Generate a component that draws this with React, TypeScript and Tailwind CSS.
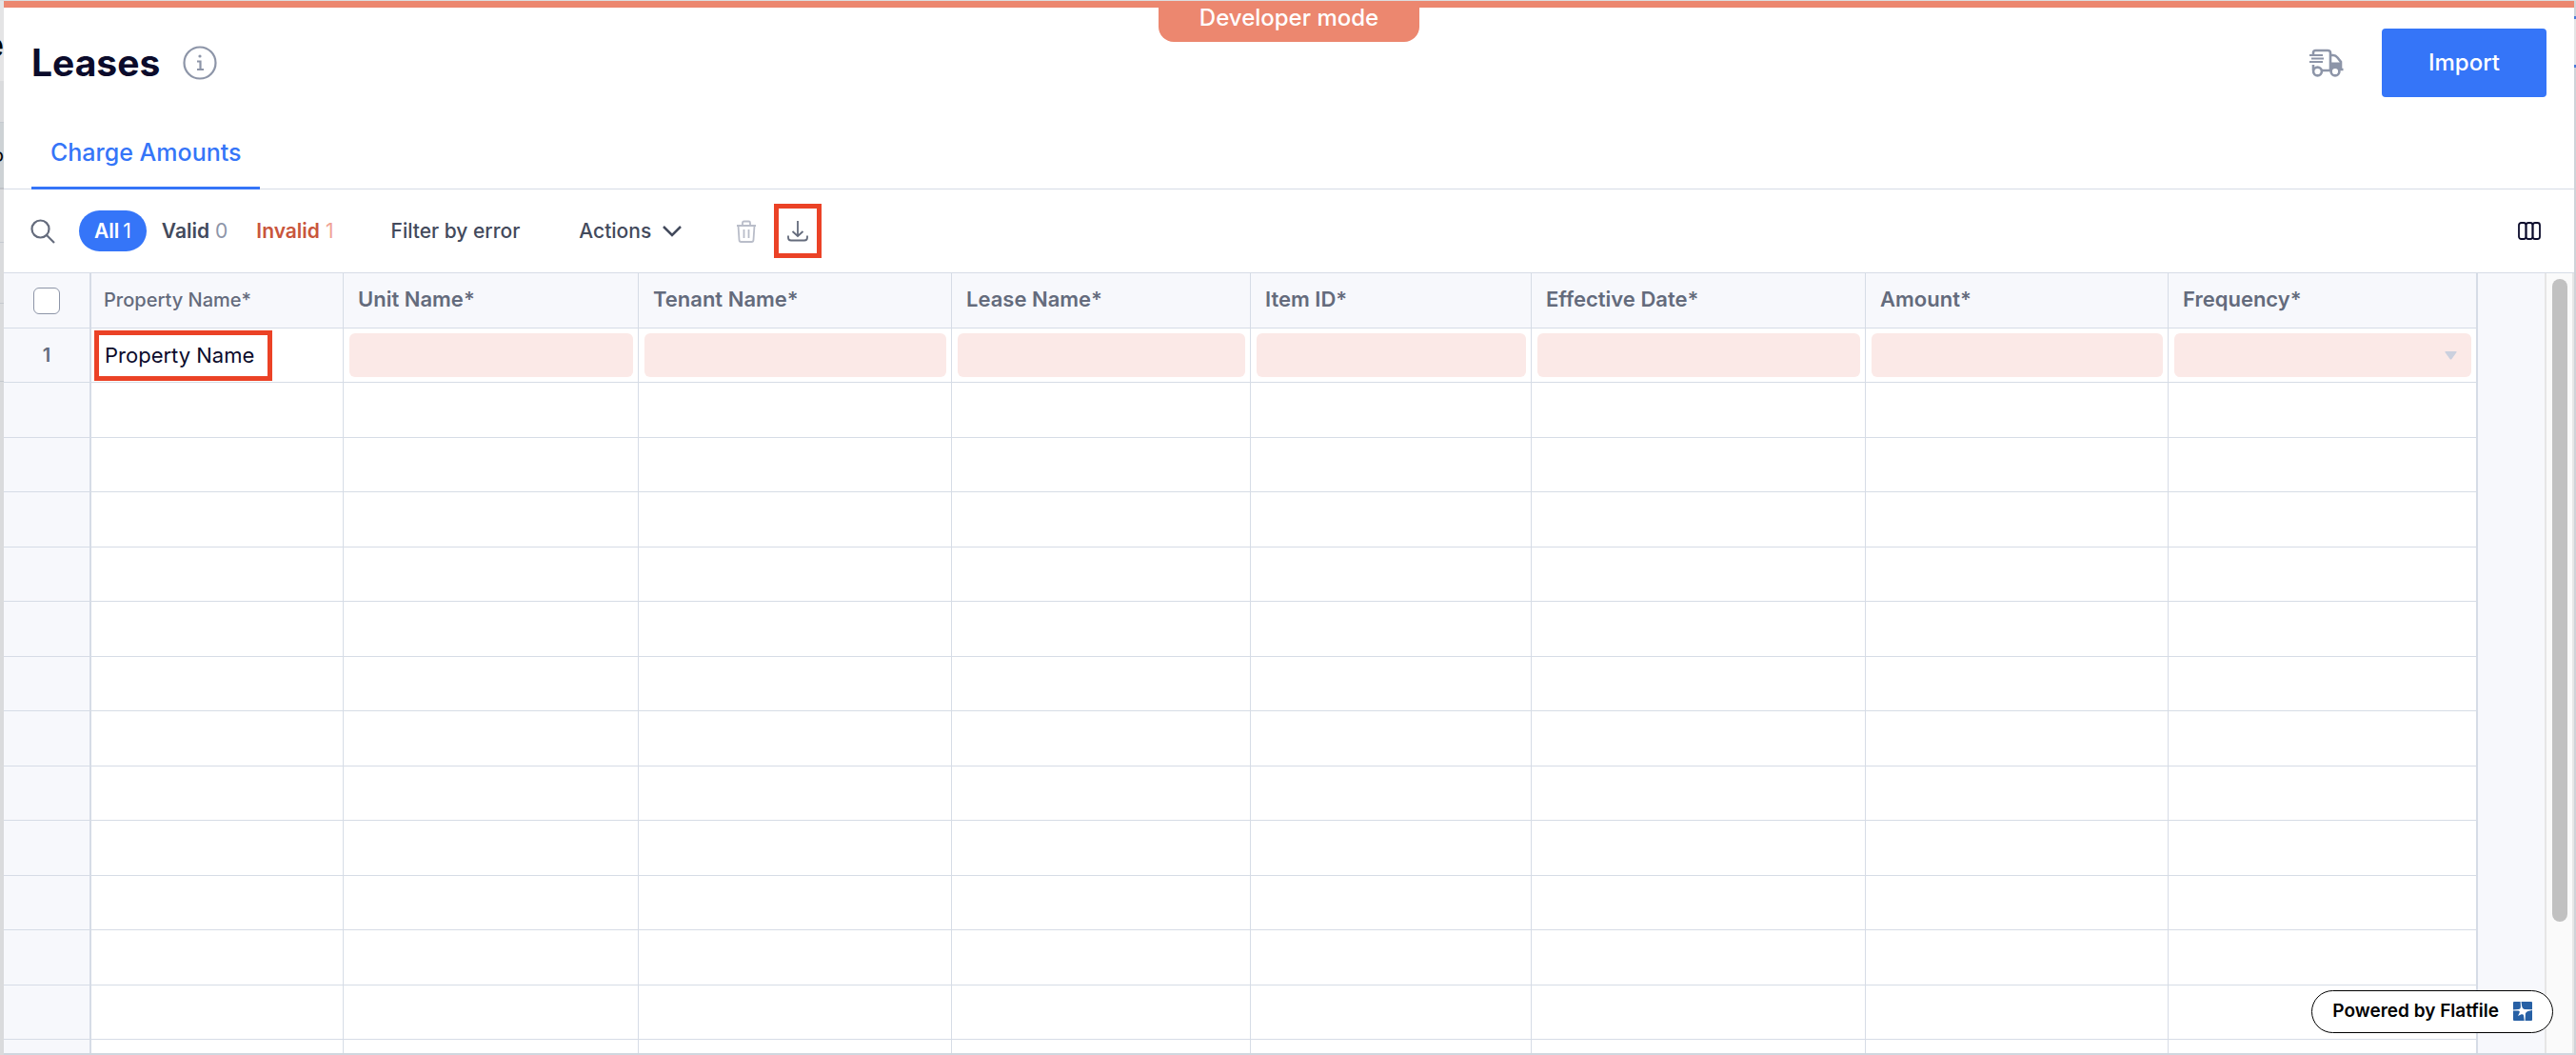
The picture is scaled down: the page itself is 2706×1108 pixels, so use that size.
import React from "react";

const columns = [
  { name: "Property Name", width: 265 },
  { name: "Unit Name", width: 310 },
  { name: "Tenant Name", width: 329 },
  { name: "Lease Name", width: 314 },
  { name: "Item ID", width: 295 },
  { name: "Effective Date", width: 351 },
  { name: "Amount", width: 318 },
  { name: "Frequency", width: 325 },
];

const emptyRows = Array.from({ length: 13 }, (_, i) => i);

function SearchIcon() {
  return (
    <svg width="26" height="26" viewBox="0 0 26 26" fill="none" stroke="#646b7c" strokeWidth="2.2">
      <circle cx="10.5" cy="10.5" r="9" />
      <path d="M17 17l8 8" />
    </svg>
  );
}

function InfoIcon() {
  return (
    <svg width="36" height="36" viewBox="0 0 36 36" fill="none" stroke="#8d95a8" strokeWidth="2.2">
      <circle cx="18" cy="18" r="16.5" />
      <path d="M15 16.5h3.500V25M15 25h7" />
      <circle cx="18" cy="11" r="1.6" fill="#8d95a8" stroke="none" />
    </svg>
  );
}

function TruckIcon() {
  return (
    <svg width="37" height="30" viewBox="0 0 37 30" fill="none" stroke="#8d95a8" strokeWidth="2.6">
      <path d="M5 6V4.500Q5 2 7.500 2H20q3 0 3 2.500V23M5 17v6M14 23h9" />
      <path d="M1 7h14M3 10.500h13M1 14h14" strokeWidth="1.8" />
      <path d="M23 7h3q2.500 0 4.500 2.500l3.500 4.500v8h2.500" />
      <path d="M23 14.500h12V23H23z" fill="#8d95a8" stroke="none" />
      <circle cx="9.5" cy="24" r="4.4" fill="#fff" />
      <circle cx="28" cy="24" r="4.4" fill="#fff" />
    </svg>
  );
}

function TrashIcon() {
  return (
    <svg width="22" height="24" viewBox="0 0 22 24" fill="none" stroke="#b9bdc9" strokeWidth="1.8">
      <path d="M1 6h20M7 6V3q0-1.500 1.500-1.500h5Q15 1.500 15 3v3M2.500 6l1 15q.1 2 2 2h11q1.900 0 2-2l1-15M8.500 10v9M13.500 10v9" />
    </svg>
  );
}

function DownloadIcon() {
  return (
    <svg width="22" height="22" viewBox="0 0 22 22" fill="none" stroke="#646b7c" strokeWidth="1.8">
      <path d="M11 0v16M5.500 11l5.500 5 5.500-5M1 15.500v2q0 3 3 3h14q3 0 3-3v-2" />
    </svg>
  );
}

function ColumnsIcon() {
  return (
    <svg width="24" height="19" viewBox="0 0 24 19" fill="none" stroke="#0b0b2b" strokeWidth="1.8">
      <rect x="1" y="1" width="7.5" height="17" rx="2.5" />
      <rect x="8.5" y="1" width="7" height="17" rx="2.5" />
      <rect x="15.5" y="1" width="7.5" height="17" rx="2.5" />
    </svg>
  );
}

function FlatfileLogo() {
  return (
    <svg width="20" height="20" viewBox="0 0 20 20">
      <rect width="20" height="20" rx="1" fill="#2760a5" />
      <path
        d="M7.600 0h.9l.7 5q.4 2.600 2.600 2.900L20 8.200v.9l-4.500 1q-2 .6-2.600 2.400l-.3 7.500h-.9l-.7-5.500q-.4-1.800-2.400-1.200L5 15l1.700-3.600q.6-1.700-1.200-1.900L0 9.400v-.9l5.500-.4Q8 7.800 7.900 5z"
        fill="#fff"
      />
    </svg>
  );
}

export default function App() {
  return (
    <div className="flex h-screen overflow-hidden bg-[#dcdddf] pt-px font-['Inter',sans-serif]">
      {/* Page behind the modal, left edge */}
      <div className="w-1 shrink-0 overflow-hidden bg-[#dadbdd]">
        <div className="flex h-[84px] items-center justify-end bg-[#e4e4e5] pt-2 text-4xl font-bold text-black">e</div>
        <div className="h-11 border-b border-[#c5c9cf]" />
        <div className="flex h-[70px] items-center justify-end border-b-2 border-[#bfc2c6] bg-[#cdd2d5] text-xl text-black">o</div>
        <div className="h-14 border-b border-[#c5c9cf]" />
        <div className="h-16 border-b border-[#c5c9cf]" />
        <div className="h-[82px] border-b border-[#c5c9cf]" />
      </div>

      <div className="flex min-w-0 flex-1 flex-col border-b-2 border-[#d0d7df] bg-white">
        <div className="relative h-[7px] shrink-0 bg-[#ec876f]">
          <div className="absolute left-1/2 top-0 flex h-[43px] w-[274px] -translate-x-1/2 items-center justify-center rounded-b-2xl bg-[#ec876f] pb-2 text-2xl font-medium text-white">
            Developer mode
          </div>
        </div>

        <header className="flex items-center justify-between px-[29px] pt-[22px]">
          <div className="flex items-center gap-6">
            <h1 className="text-[39px] font-bold text-[#0b0b2b]">Leases</h1>
            <button aria-label="About leases"><InfoIcon /></button>
          </div>
          <div className="flex items-center gap-10">
            <button aria-label="Deliveries"><TruckIcon /></button>
            <button className="h-[72px] w-[173px] rounded bg-[#3575f8] text-2xl font-medium text-white">Import</button>
          </div>
        </header>

        <nav className="mt-6 flex h-[73px] shrink-0 border-b border-[#d6dce6] px-[29px]">
          <a href="#charge-amounts" className="-mb-px flex items-center border-b-[3px] border-[#3575f8] px-5 text-[25px] font-medium text-[#3575f8]">
            Charge Amounts
          </a>
        </nav>

        <div className="flex h-[87px] shrink-0 items-center pl-7 pr-[35px] text-[21px] text-[#434a5c]">
          <button aria-label="Search"><SearchIcon /></button>
          <button className="ml-[25px] flex h-[43px] items-center gap-1 rounded-full bg-[#3575f8] px-4 text-white">
            <span className="font-semibold">All</span>1
          </button>
          <button className="ml-4 flex gap-1.5 text-[#8d95a8]">
            <span className="font-semibold text-[#434a5c]">Valid</span>0
          </button>
          <button className="ml-[30px] flex gap-1.5 text-[#f0a294]">
            <span className="font-semibold text-[#c9563c]">Invalid</span>1
          </button>
          <button className="ml-[60px] font-medium">Filter by error</button>
          <button className="ml-[62px] flex items-center gap-3 font-medium">
            Actions
            <svg width="20" height="12" viewBox="0 0 20 12" fill="none" stroke="#434a5c" strokeWidth="2.5">
              <path d="M1 1l9 9 9-9" />
            </svg>
          </button>
          <button aria-label="Delete" className="ml-[57px]"><TrashIcon /></button>
          <button aria-label="Download" className="ml-[18px] flex h-[57px] w-[50px] items-center justify-center border-[5px] border-[#eb4226]">
            <DownloadIcon />
          </button>
          <button aria-label="Columns" className="ml-auto"><ColumnsIcon /></button>
        </div>

        <div className="flex min-h-0 flex-1 border-t border-[#d6dce6]">
          <div className="min-w-0 flex-1 overflow-hidden bg-[#f7f8fc]">
            <table className="w-full table-fixed border-separate border-spacing-0">
              <colgroup>
                <col style={{ width: 92 }} />
                {columns.map((c) => (
                  <col key={c.name} style={{ width: c.width }} />
                ))}
                <col style={{ width: 70 }} />
              </colgroup>
              <thead>
                <tr className="h-[58px] text-left text-[22px] text-[#646b7c]">
                  <th className="border-b border-r-2 border-[#d6dce6]">
                    <input type="checkbox" aria-label="Select all rows" className="mx-auto block size-7 appearance-none rounded-md border border-[#8d95a8] bg-white" />
                  </th>
                  {columns.map((c, i) => (
                    <th
                      key={c.name}
                      className={`border-b border-[#d6dce6] pb-0.5 ${i === 7 ? "border-r-2" : "border-r"} ${i === 0 ? "pl-[13px] text-xl font-medium" : "pl-[15px] font-semibold"}`}
                    >
                      {c.name}*
                    </th>
                  ))}
                  <th />
                </tr>
              </thead>
              <tbody>
                <tr className="h-[57px] text-[22px]">
                  <th className="border-b border-r-2 border-[#d6dce6] text-xl font-semibold text-[#646b7c]">1</th>
                  {columns.map((c, i) => (
                    <td key={c.name} className={`border-b border-[#d6dce6] bg-white ${i === 7 ? "border-r-2" : "border-r"}`}>
                      {i === 0 ? (
                        <div className="ml-[3px] flex h-[53px] w-[187px] items-center whitespace-nowrap border-[5px] border-[#eb4226] pl-[6px] text-[#0b0b2b]">
                          Property Name
                        </div>
                      ) : (
                        <div className="ml-[6px] mr-[5px] flex h-[46px] items-center justify-end rounded-md bg-[#fbe9e7] pr-[15px]">
                          {i === 7 && (
                            <svg width="13" height="9" viewBox="0 0 13 9">
                              <path d="M1 0h11q1 0 .5 1L7.500 8q-1 1-2 0L.5 1Q0 0 1 0z" fill="#cbd0de" />
                            </svg>
                          )}
                        </div>
                      )}
                    </td>
                  ))}
                  <td />
                </tr>
                {emptyRows.map((r) => (
                  <tr key={r} className="odd:h-[57px] even:h-[58px]">
                    <th className="border-b border-r-2 border-[#d6dce6]" />
                    {columns.map((c, i) => (
                      <td key={c.name} className={`border-b border-[#d6dce6] bg-white ${i === 7 ? "border-r-2" : "border-r"}`} />
                    ))}
                    <td />
                  </tr>
                ))}
              </tbody>
            </table>
          </div>
          {/* Scrollbar */}
          <div className="w-[31px] shrink-0 border-x-2 border-[#e6e6e6] bg-[#fafafa] pt-[6px]">
            <div className="mx-auto h-[83%] w-4 rounded-full bg-[#c1c1c1]" />
          </div>
        </div>
      </div>

      {/* Page behind the modal, right edge */}
      <div className="w-[2px] shrink-0 bg-[#cfd3d8]">
        <div className="mt-4 h-[54px] border-y-[3px] border-[#4a7ad8] bg-[#e4e4e5]" />
      </div>

      <a
        href="#flatfile"
        className="absolute bottom-[23px] right-6 flex h-[45px] items-center gap-[15px] rounded-full border border-black bg-white px-[21px] pb-px text-[19px] font-semibold text-black"
      >
        Powered by Flatfile
        <FlatfileLogo />
      </a>
    </div>
  );
}
